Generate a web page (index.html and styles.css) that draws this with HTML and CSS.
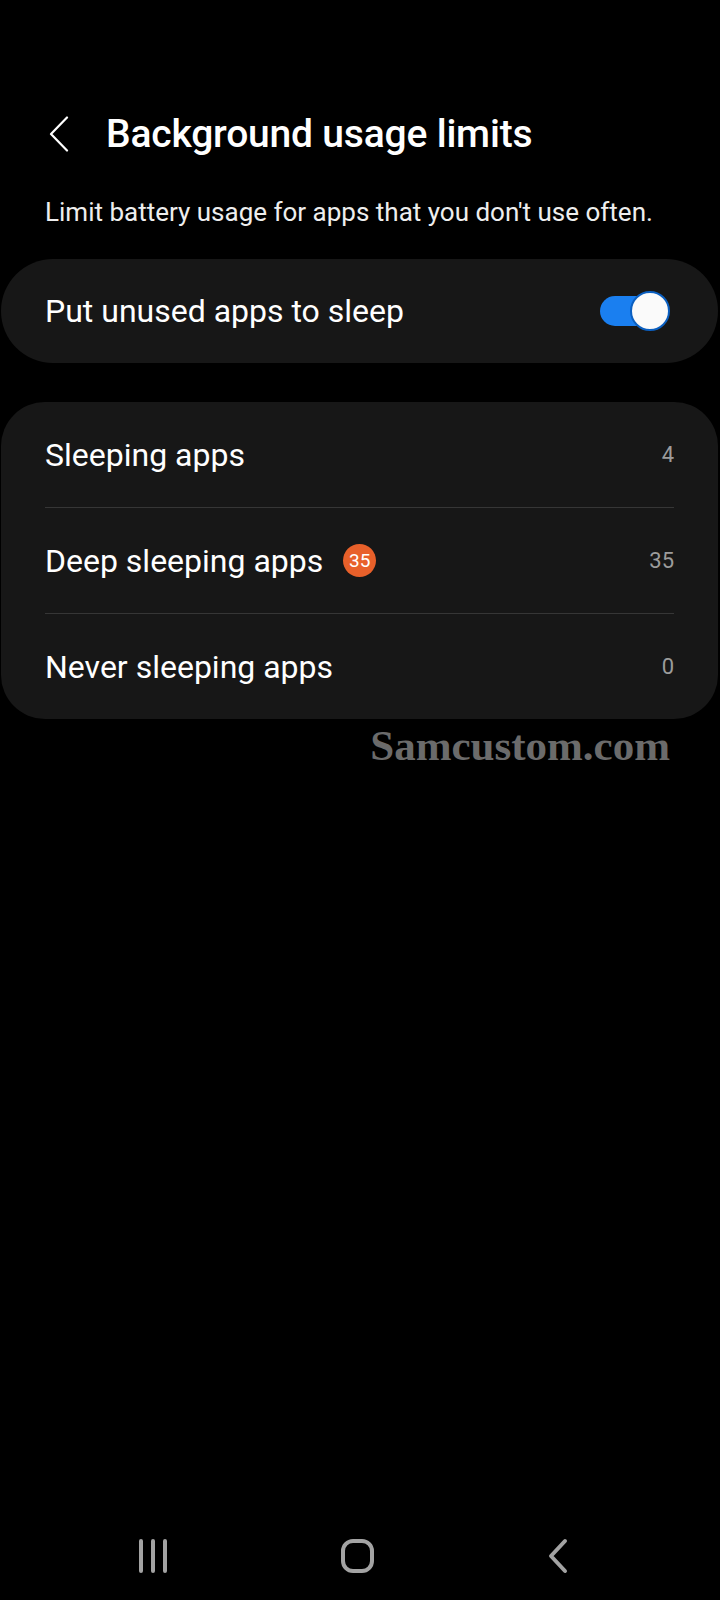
FILE: index.html
```html
<!DOCTYPE html>
<html lang="en">
<head>
	<meta charset="UTF-8">
	<title>Background usage limits</title>
	<link rel="stylesheet" href="styles.css">
</head>
<body>
	<div id="screen">
		<div class="header">
			<a class="back" href="javascript:">
				<svg width="22" height="36" viewBox="0 0 22 36"><path d="M19 1.5 L3 18 L19 34.5" fill="none" stroke="#fff" stroke-width="2.2" stroke-linecap="round" stroke-linejoin="round"/></svg>
			</a>
			<h1>Background usage limits</h1>
		</div>
		<p class="desc">Limit battery usage for apps that you don't use often.</p>

		<div class="card switch-card">
			<span class="label">Put unused apps to sleep</span>
			<span class="toggle"><span class="thumb"></span></span>
		</div>

		<div class="card list">
			<div class="row">
				<span class="label">Sleeping apps</span>
				<span class="value">4</span>
			</div>
			<div class="row">
				<span class="label">Deep sleeping apps <span class="badge">35</span></span>
				<span class="value">35</span>
			</div>
			<div class="row">
				<span class="label">Never sleeping apps</span>
				<span class="value">0</span>
			</div>
		</div>

		<div class="watermark">Samcustom.com</div>

		<div class="navbar">
			<svg width="34" height="36" viewBox="0 0 34 36"><path d="M5 3 V33 M17 3 V33 M29 3 V33" stroke="#a3a3a3" stroke-width="4" stroke-linecap="round"/></svg>
			<svg width="36" height="36" viewBox="0 0 36 36"><rect x="3" y="3" width="29" height="30" rx="10" fill="none" stroke="#a3a3a3" stroke-width="4"/></svg>
			<svg width="24" height="36" viewBox="0 0 24 36"><path d="M19 3 L5 18 L19 33" fill="none" stroke="#a3a3a3" stroke-width="4" stroke-linecap="round" stroke-linejoin="round"/></svg>
		</div>
	</div>
</body>
</html>
```

FILE: styles.css
```css
html, body {
	margin: 0;
	padding: 0;
	background: #000;
}
#screen {
	width: 720px;
	height: 1600px;
	position: relative;
	font-family: Roboto, "Noto Sans", sans-serif;
	color: #fff;
	overflow: hidden;
}
.header {
	display: flex;
	align-items: center;
	height: 64px;
	padding: 102px 0 0 48px;
}
.back {
	display: block;
	width: 22px;
	height: 36px;
	margin-right: 36px;
}
.header h1 {
	margin: 0;
	font-size: 39px;
	font-weight: 500;
	letter-spacing: -0.2px;
}
.desc {
	margin: 30px 0 0 45px;
	height: 32px;
	line-height: 32px;
	font-size: 26px;
	color: #eee;
}
.card {
	background: #171717;
	margin: 0 2px 0 1px;
}
.switch-card {
	display: flex;
	align-items: center;
	justify-content: space-between;
	height: 104px;
	margin-top: 31px;
	padding: 0 60px 0 44px;
	border-radius: 52px;
}
.label {
	display: flex;
	align-items: center;
	font-size: 32px;
}
.toggle {
	position: relative;
	display: block;
	width: 58px;
	height: 30px;
	border-radius: 15px;
	background: #1a7ff0;
}
.thumb {
	position: absolute;
	right: -12px;
	top: -5px;
	width: 36px;
	height: 36px;
	border-radius: 50%;
	background: #fafafa;
	border: 2px solid #0b5fc0;
}
.list {
	margin-top: 39px;
	border-radius: 44px;
	padding: 0 44px;
}
.row {
	display: flex;
	align-items: center;
	justify-content: space-between;
	height: 105px;
	border-top: 1px solid #363636;
}
.row:first-child {
	border-top: none;
}
.value {
	font-size: 22px;
	color: #9c9c9c;
}
.badge {
	display: inline-flex;
	align-items: center;
	justify-content: center;
	width: 33px;
	height: 33px;
	margin-left: 20px;
	border-radius: 50%;
	background: #e8602a;
	font-size: 19px;
	color: #fff;
}
.watermark {
	margin: 2px 50px 0 0;
	text-align: right;
	font-family: "Liberation Serif", serif;
	font-weight: bold;
	font-size: 43px;
	color: #6b6b6b;
}
.navbar {
	position: absolute;
	left: 0;
	right: 0;
	bottom: 0;
	height: 88px;
	display: flex;
	align-items: center;
	justify-content: space-between;
	padding: 0 150px 0 136px;
}
```
